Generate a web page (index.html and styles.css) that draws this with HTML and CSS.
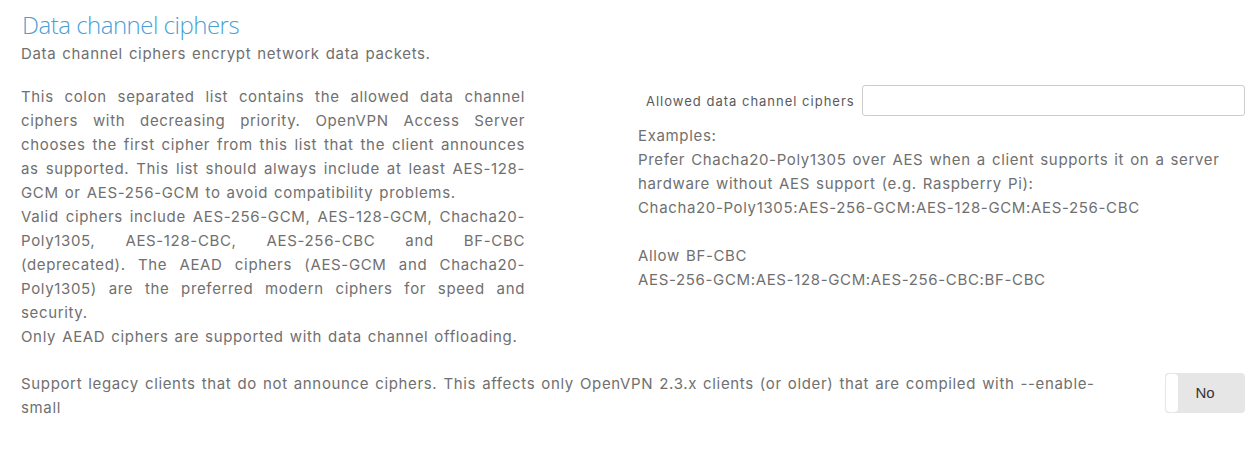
FILE: index.html
```html
<!DOCTYPE html>
<html lang="en">
<head>
<meta charset="utf-8">
<title>Data channel ciphers</title>
<link rel="stylesheet" href="styles.css">
</head>
<body>
<section class="panel">
  <h2 class="title">Data channel ciphers</h2>
  <p class="subtitle">Data channel ciphers encrypt network data packets.</p>
  <div class="row">
    <div class="desc">
      <p>This colon separated list contains the allowed data channel ciphers with decreasing priority. OpenVPN Access Server chooses the first cipher from this list that the client announces as supported. This list should always include at least AES-128-GCM or AES-256-GCM to avoid compatibility problems.</p>
      <p>Valid ciphers include AES-256-GCM, AES-128-GCM, Chacha20-Poly1305, AES-128-CBC, AES-256-CBC and BF-CBC (deprecated). The AEAD ciphers (AES-GCM and Chacha20-Poly1305) are the preferred modern ciphers for speed and security.</p>
      <p>Only AEAD ciphers are supported with data channel offloading.</p>
    </div>
    <div class="field">
      <div class="field-row">
        <label class="field-label" for="ciphers">Allowed data channel ciphers</label>
        <input class="field-input" id="ciphers" type="text">
      </div>
      <div class="examples">
        <p>Examples:<br>Prefer Chacha20-Poly1305 over AES when a client supports it on a server hardware without AES support (e.g. Raspberry Pi):<br>Chacha20-Poly1305:AES-256-GCM:AES-128-GCM:AES-256-CBC</p>
        <p>Allow BF-CBC<br>AES-256-GCM:AES-128-GCM:AES-256-CBC:BF-CBC</p>
      </div>
    </div>
  </div>
  <div class="legacy">
    <p class="legacy-text">Support legacy clients that do not announce ciphers. This affects only OpenVPN 2.3.x clients (or older) that are compiled with --enable-small</p>
    <div class="toggle"><span class="knob"></span><span class="toggle-label">No</span></div>
  </div>
</section>
</body>
</html>
```
FILE: styles.css
```css
html, body {
  margin: 0;
  padding: 0;
  background: #ffffff;
}
body {
  font-family: Inter, "Open Sans", sans-serif;
  font-size: 15px;
  letter-spacing: 0.65px;
  word-spacing: 1.2px;
  line-height: 24px;
  color: #707070;
}
p { margin: 0; }
.panel {
  padding: 10px 15px 0 21px;
}
.title {
  margin: 0 0 2px 1px;
  font-family: "Open Sans", sans-serif;
  font-weight: 300;
  font-size: 24px;
  letter-spacing: -0.5px;
  word-spacing: 0;
  line-height: 30px;
  color: #4a9fd5;
}
.subtitle {
  margin-bottom: 19px;
}
.row {
  display: grid;
  grid-template-columns: 504px 1fr;
  column-gap: 113px;
}
.desc p {
  text-align: justify;
}
.field-row {
  display: flex;
  align-items: center;
  gap: 7px;
  padding-left: 8px;
}
.field-label {
  font-size: 13px;
  letter-spacing: 1px;
  word-spacing: 0;
  color: #5a5a5a;
  white-space: nowrap;
}
.field-input {
  flex: 1;
  height: 31px;
  box-sizing: border-box;
  border: 1px solid #cccccc;
  border-radius: 3px;
  margin: 0;
  padding: 4px 8px;
}
.examples {
  margin-top: 8px;
  display: flex;
  flex-direction: column;
  gap: 24px;
}
.legacy {
  margin-top: 23px;
  display: flex;
  align-items: flex-start;
  justify-content: space-between;
}
.legacy-text {
  width: 1100px;
}
.toggle {
  margin-top: 1px;
  width: 80px;
  height: 40px;
  box-sizing: border-box;
  background: #e6e6e6;
  border-radius: 4px;
  position: relative;
  display: flex;
  align-items: center;
  justify-content: center;
}
.knob {
  position: absolute;
  left: 1px;
  top: 1px;
  bottom: 1px;
  width: 12px;
  background: #ffffff;
  border-radius: 4px;
}
.toggle-label {
  font-family: "Liberation Sans", Arial, sans-serif;
  font-size: 15px;
  letter-spacing: 0;
  word-spacing: 0;
  color: #333333;
}
```
